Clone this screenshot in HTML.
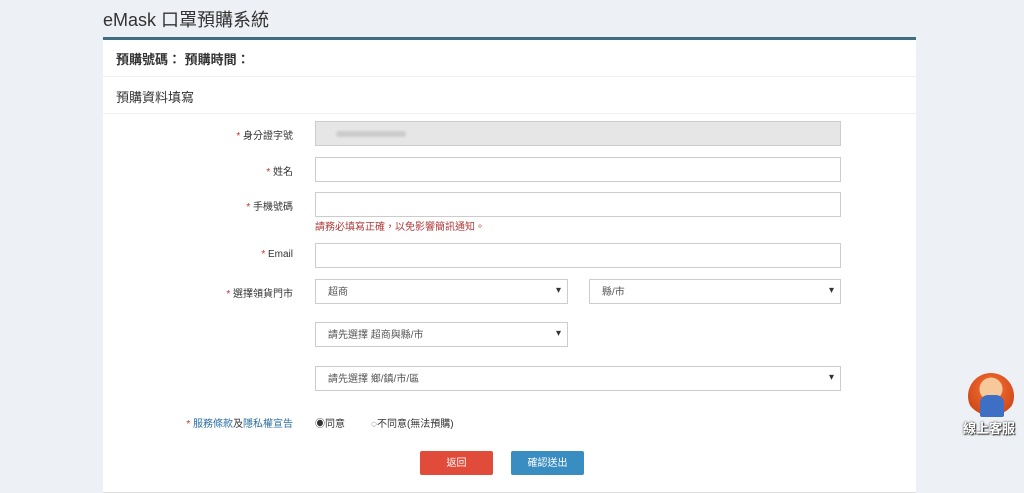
<!DOCTYPE html><html><head><meta charset="utf-8"><style>
body{margin:0;width:1024px;height:492px;background:#edf0f4;font-family:"Liberation Sans","Noto Sans CJK TC",sans-serif;position:relative;overflow:hidden;color:#333}
.a{position:absolute}
.t{left:103px;top:6px;font-size:18px;color:#333}
.p{left:103px;top:37px;width:813px;height:452px;background:#fff;border-top:3px solid #3d6f80;border-bottom:1px solid #ddd}
.h{font-size:13px;color:#333}
.line{height:1px;background:#f0f0f0;left:103px;width:813px}
.lb{font-size:10px;right:731px;text-align:right;white-space:nowrap}
.lb i{color:#c9302c;font-style:normal}
.in{border:1px solid #ccc;background:#fff;height:23px;box-sizing:content-box;font-size:10px;color:#555}
.sel::after{content:"▾";position:absolute;right:6px;top:5px;font-size:10px;color:#333}
.sel span{position:absolute;left:12px;top:7px;line-height:12px}
.btn{color:#fff;font-size:10px;text-align:center;border-radius:2px;width:73px;height:24px}
.btn span{position:absolute;left:0;right:0;top:7px;line-height:12px}
</style></head><body>
<div class="a t">eMask 口罩預購系統</div>
<div class="a p"></div>
<div class="a h" style="left:116px;top:49px;font-weight:bold">預購號碼： 預購時間：</div>
<div class="a line" style="top:76px"></div>
<div class="a h" style="left:116px;top:87px">預購資料填寫</div>
<div class="a line" style="top:113px"></div>

<div class="a lb" style="top:127px"><i>* </i>身分證字號</div>
<div class="a in" style="left:315px;top:121px;width:524px;background:#e6e6e6"><div style="position:absolute;left:20px;top:9px;width:70px;height:6px;background:#ccc;border-radius:3px;filter:blur(1px)"></div></div>
<div class="a lb" style="top:163px"><i>* </i>姓名</div>
<div class="a in" style="left:315px;top:157px;width:524px"></div>
<div class="a lb" style="top:198px"><i>* </i>手機號碼</div>
<div class="a in" style="left:315px;top:192px;width:524px"></div>
<div class="a" style="left:315px;top:218px;font-size:10px;color:#b03a3a">請務必填寫正確，以免影響簡訊通知。</div>
<div class="a lb" style="top:249px"><i>* </i>Email</div>
<div class="a in" style="left:315px;top:243px;width:524px"></div>
<div class="a lb" style="top:285px"><i>* </i>選擇領貨門市</div>
<div class="a in sel" style="left:315px;top:279px;width:251px"><span>超商</span></div>
<div class="a in sel" style="left:589px;top:279px;width:250px"><span>縣/市</span></div>
<div class="a in sel" style="left:315px;top:322px;width:251px"><span>請先選擇 超商與縣/市</span></div>
<div class="a in sel" style="left:315px;top:366px;width:524px"><span>請先選擇 鄉/鎮/市/區</span></div>

<div class="a lb" style="top:415px;color:#2a6ea0"><i>* </i>服務條款<span style="color:#333">及</span>隱私權宣告</div>
<div class="a" style="left:315px;top:415px;font-size:10px">◉同意</div>
<div class="a" style="left:371px;top:415px;font-size:10px">◌不同意(無法預購)</div>
<div class="a btn" style="left:420px;top:451px;background:#e04b3a"><span>返回</span></div>
<div class="a btn" style="left:511px;top:451px;background:#3a8dc0"><span>確認送出</span></div>

<div class="a" style="left:968px;top:373px;width:46px;height:46px;border-radius:50%;background:radial-gradient(circle at 50% 35%,#f7c99a 0 30%,#e8612a 31%,#d04a1a 70%,transparent 71%)"></div>
<div class="a" style="left:980px;top:395px;width:24px;height:22px;background:#3f6fc4;border-radius:8px 8px 2px 2px"></div>
<div class="a" style="left:963px;top:418px;font-size:13px;font-weight:bold;color:#fff;text-shadow:0 0 2px #333,1px 1px 1px #333">線上客服</div>
</body></html>
